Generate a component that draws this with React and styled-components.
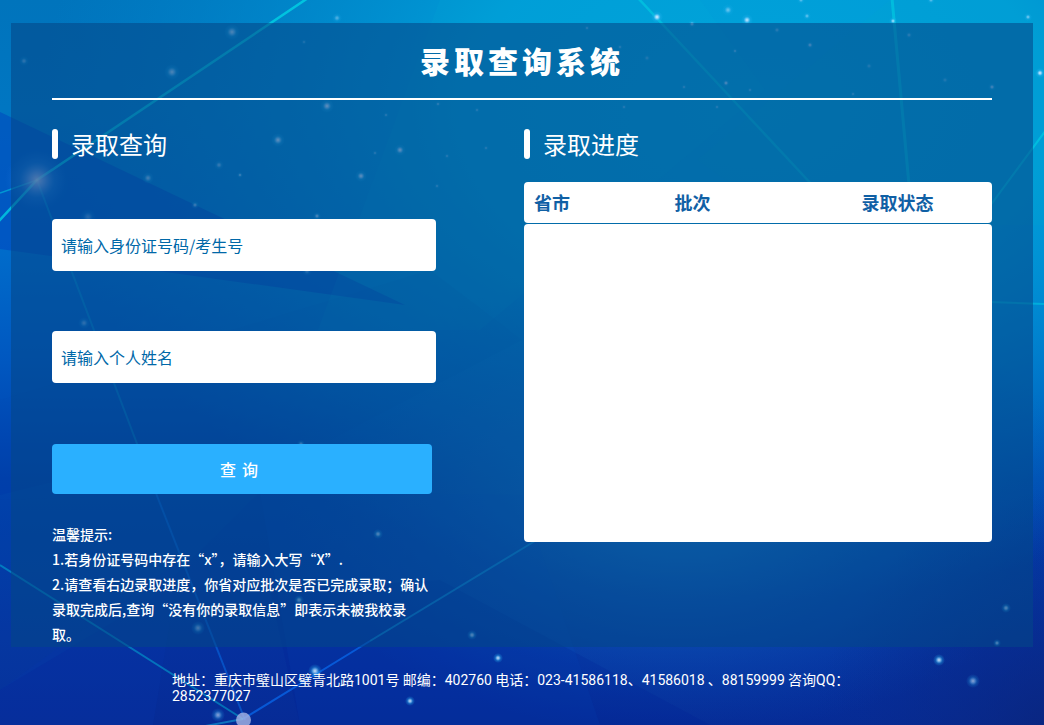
import React from "react";
import styled, { createGlobalStyle } from "styled-components";

const TIPS = [
  "温馨提示:",
  "1.若身份证号码中存在“x”，请输入大写“X”.",
  "2.请查看右边录取进度，你省对应批次是否已完成录取；确认录取完成后,查询“没有你的录取信息”即表示未被我校录取。",
];

const ADDRESS =
  "地址：重庆市璧山区璧青北路1001号 邮编：402760 电话：023-41586118、41586018 、88159999 咨询QQ：2852377027";

// x, y, radius, opacity
const STARS = [
  [232, 32, 8, 0.8], [172, 72, 8, 0.8], [327, 106, 7, 1], [278, 140, 7, 1],
  [400, 150, 6, 1], [361, 176, 6, 1], [219, 165, 5, 0.6], [240, 175, 3, 0.8],
  [148, 178, 6, 0.7], [88, 217, 8, 0.4], [195, 205, 4, 0.7], [317, 216, 4, 0.9],
  [24, 61, 5, 0.5], [337, 18, 5, 0.4], [304, 42, 3, 0.4], [84, 323, 6, 0.5],
  [386, 115, 3, 0.5], [438, 104, 3, 0.6], [477, 110, 3, 0.5], [447, 156, 3, 0.5],
  [486, 148, 3, 0.5], [437, 186, 3, 0.5], [375, 153, 3, 0.5], [307, 271, 5, 0.5],
  [657, 17, 6, 1], [692, 24, 4, 0.7], [728, 10, 6, 0.5], [747, 20, 6, 0.9],
  [807, 16, 4, 0.5], [893, 21, 4, 0.8], [777, 30, 4, 0.5], [810, 45, 4, 0.8],
  [909, 35, 4, 0.5], [735, 51, 3, 0.6], [726, 83, 4, 0.9], [684, 87, 3, 0.5],
  [750, 90, 3, 0.5], [853, 94, 3, 0.5], [992, 87, 4, 0.8], [945, 80, 4, 0.4],
  [869, 66, 4, 0.4], [647, 58, 4, 0.4], [587, 28, 3, 0.5], [620, 47, 3, 0.5],
  [624, 107, 3, 0.5], [717, 107, 3, 0.5], [1028, 17, 4, 0.6], [1040, 73, 5, 1],
  [801, 0, 4, 0.5], [931, 0, 4, 0.5], [301, 444, 4, 0.7], [378, 534, 5, 0.9],
  [299, 600, 5, 0.8], [198, 628, 7, 0.7], [472, 635, 5, 0.9], [498, 658, 5, 0.9],
  [315, 671, 7, 0.9], [410, 701, 5, 0.9], [218, 715, 7, 0.6], [939, 660, 6, 0.9],
  [973, 681, 7, 0.6], [1006, 608, 5, 0.9], [997, 643, 4, 0.9],
];

const Background = () => (
  <Scene viewBox="0 0 1044 725" preserveAspectRatio="none" aria-hidden="true">
    <defs>
      <linearGradient id="base" x1="0" y1="0" x2="0" y2="1">
        <stop offset="0" stopColor="#0074bc" />
        <stop offset="0.15" stopColor="#0076c2" />
        <stop offset="0.35" stopColor="#006bca" />
        <stop offset="0.5" stopColor="#0057c0" />
        <stop offset="0.66" stopColor="#003fab" />
        <stop offset="0.88" stopColor="#05319f" />
        <stop offset="1" stopColor="#062b96" />
      </linearGradient>
      <radialGradient
        id="sky"
        gradientUnits="userSpaceOnUse"
        cx="0"
        cy="0"
        r="1"
        gradientTransform="translate(760 110) scale(720 490)"
      >
        <stop offset="0" stopColor="#00a3da" />
        <stop offset="0.4" stopColor="#009fd9" stopOpacity="0.94" />
        <stop offset="0.7" stopColor="#0094d4" stopOpacity="0.5" />
        <stop offset="1" stopColor="#0088cf" stopOpacity="0" />
      </radialGradient>
      <radialGradient
        id="glow"
        gradientUnits="userSpaceOnUse"
        cx="0"
        cy="0"
        r="1"
        gradientTransform="translate(680 500) scale(400 235)"
      >
        <stop offset="0" stopColor="#1a88d2" stopOpacity="0.85" />
        <stop offset="1" stopColor="#0a58bd" stopOpacity="0" />
      </radialGradient>
      <radialGradient id="corner" gradientUnits="userSpaceOnUse" cx="1070" cy="750" r="260">
        <stop offset="0" stopColor="#0a2378" stopOpacity="0.85" />
        <stop offset="1" stopColor="#0a2c8c" stopOpacity="0" />
      </radialGradient>
      <radialGradient id="star">
        <stop offset="0" stopColor="#e6f3ff" />
        <stop offset="0.3" stopColor="#8fd3ff" stopOpacity="0.8" />
        <stop offset="0.6" stopColor="#28b4f0" stopOpacity="0.35" />
        <stop offset="1" stopColor="#28b4f0" stopOpacity="0" />
      </radialGradient>
      <radialGradient id="flare">
        <stop offset="0" stopColor="#d8cfe8" />
        <stop offset="0.25" stopColor="#9cb8ee" stopOpacity="0.7" />
        <stop offset="0.55" stopColor="#3c96e6" stopOpacity="0.35" />
        <stop offset="1" stopColor="#1878dc" stopOpacity="0" />
      </radialGradient>
    </defs>
    <rect width="1044" height="725" fill="url(#base)" />
    <rect width="1044" height="725" fill="url(#sky)" />
    <rect width="1044" height="725" fill="url(#glow)" />
    <rect width="1044" height="725" fill="url(#corner)" />

    <path d="M0 112L405 305L0 249Z" fill="#0042be" opacity="0.5" />
    <path d="M440 0H700L765 90L480 330L318 330Z" fill="#00b4dc" opacity="0.13" />
    <path d="M890 0L697 160L790 225H1044V0Z" fill="#00a8cc" opacity="0.14" />
    <path d="M522 340L330 440L140 495L0 500V400L430 270Z" fill="#003cae" opacity="0.06" />
    <path d="M260 492L522 495L600 725H300Z" fill="#0753c0" opacity="0.16" />
    <path d="M0 495L140 460L260 492L150 600L0 690Z" fill="#0560b8" opacity="0.12" />
    <path d="M0 690L180 560L153 725H0Z" fill="#0634a8" opacity="0.3" />
    <path d="M440 580L710 725H300L270 590Z" fill="#021f94" opacity="0.2" />

    <g fill="none" stroke="#00d7e6">
      <path d="M308 -2L37 180L-2 222" strokeWidth="2.5" opacity="0.75" />
      <path d="M37 180L0 193" strokeWidth="1.5" opacity="0.5" />
      <path d="M37 180L150 478" strokeWidth="2" opacity="0.25" />
      <path d="M638 -2L815 188" strokeWidth="2.5" opacity="0.5" />
      <path d="M892 -2L909 185" strokeWidth="3" opacity="0.5" />
      <path d="M1046 130L990 206" strokeWidth="2" opacity="0.55" />
      <path d="M990 302L1044 304" strokeWidth="2" opacity="0.45" />
      <path d="M0 565L243 719" strokeWidth="2" opacity="0.4" />
    </g>
    <g fill="none" stroke="#0879f5" strokeWidth="2">
      <path d="M150 478L245 720" opacity="0.45" />
      <path d="M243 719L370 641" stroke="#086bf0" opacity="0.7" />
      <path d="M370 641L535 541" stroke="#10b4f0" opacity="0.55" />
      <path d="M200 727L243 719" stroke="#12b8e4" opacity="0.5" />
    </g>

    {STARS.map(([x, y, r, opacity]) => (
      <circle key={`${x}-${y}`} cx={x} cy={y} r={r} fill="url(#star)" opacity={opacity} />
    ))}
    <circle cx="37" cy="180" r="32" fill="url(#flare)" opacity="0.85" />
    <circle cx="243.5" cy="720" r="7.5" fill="#a6b5e5" opacity="0.8" />
  </Scene>
);

const App = () => {
  return (
    <Page>
      <GlobalStyle />
      <Background />
      <Panel>
        <Title>录取查询系统</Title>
        <Columns>
          <Form onSubmit={(e) => e.preventDefault()}>
            <SectionHeading>录取查询</SectionHeading>
            <Fields>
              <Input placeholder="请输入身份证号码/考生号" />
              <Input placeholder="请输入个人姓名" />
            </Fields>
            <Submit type="submit">查询</Submit>
            <Tips>
              {TIPS.map((tip) => (
                <p key={tip}>{tip}</p>
              ))}
            </Tips>
          </Form>
          <Progress>
            <SectionHeading>录取进度</SectionHeading>
            <TableHead>
              <span>省市</span>
              <span>批次</span>
              <span>录取状态</span>
            </TableHead>
            <TableBody />
          </Progress>
        </Columns>
      </Panel>
      <Footer>{ADDRESS}</Footer>
    </Page>
  );
};

const GlobalStyle = createGlobalStyle`
  * {
    box-sizing: border-box;
  }

  body {
    margin: 0;
    background: #0060b0;
    font-family: "Noto Sans CJK SC", sans-serif;
  }

  h1, h2, p {
    margin: 0;
  }
`;

const Page = styled.div`
  position: relative;
  z-index: 0;
  height: 725px;
  padding: 23px 11px 0;
`;

const Scene = styled.svg`
  position: absolute;
  inset: 0;
  z-index: -1;
  width: 100%;
  height: 100%;
`;

const Panel = styled.main`
  height: 624px;
  padding: 0 41px;
  background: rgba(4, 70, 136, 0.57);
`;

const Title = styled.h1`
  height: 77px;
  border-bottom: 2px solid #fff;
  color: #fff;
  font-size: 30px;
  font-weight: 900;
  letter-spacing: 4px;
  line-height: 74px;
  text-align: center;
`;

const Columns = styled.div`
  display: flex;
  justify-content: space-between;
  padding-top: 29px;
`;

const Form = styled.form`
  width: 384px;
`;

const Progress = styled.section`
  width: 468px;
`;

const SectionHeading = styled.h2`
  display: flex;
  align-items: center;
  gap: 13px;
  height: 30px;
  color: #fff;
  font-size: 24px;
  font-weight: 400;
  line-height: 30px;

  &::before {
    content: "";
    width: 6px;
    height: 30px;
    border-radius: 3px;
    background: #fff;
  }
`;

const Fields = styled.div`
  display: flex;
  flex-direction: column;
  gap: 60px;
  padding-top: 60px;
`;

const Input = styled.input`
  width: 100%;
  height: 52px;
  padding: 0 9px;
  border: 0;
  border-radius: 4px;
  background: #fff;
  color: #0068a8;
  font-family: inherit;
  font-size: 16px;

  &::placeholder {
    color: #0068a8;
  }
`;

const Submit = styled.button`
  display: block;
  width: 380px;
  height: 50px;
  margin-top: 61px;
  border: 0;
  border-radius: 4px;
  background: #2ab0ff;
  color: #fff;
  font-family: inherit;
  font-size: 16px;
  font-weight: 500;
  letter-spacing: 6px;
`;

const Tips = styled.div`
  width: 380px;
  margin-top: 28px;
  color: #fff;
  font-size: 14px;
  font-weight: 500;
  line-height: 25px;
`;

const TableHead = styled.div`
  display: grid;
  grid-template-columns: 30% 40% 30%;
  height: 41px;
  margin-top: 23px;
  border-radius: 4px;
  background: #fff;
  color: #1060a5;
  font-size: 18px;
  font-weight: 700;
  line-height: 40px;

  span {
    padding-left: 10px;
  }
`;

const TableBody = styled.div`
  height: 318px;
  margin-top: 1px;
  border-radius: 4px;
  background: #fff;
`;

const Footer = styled.footer`
  width: 700px;
  margin: 25px auto 0;
  color: #fff;
  font-family: Roboto, "Noto Sans CJK SC", sans-serif;
  font-size: 14px;
  line-height: 16px;
  word-spacing: -0.2px;
`;

export default App;
